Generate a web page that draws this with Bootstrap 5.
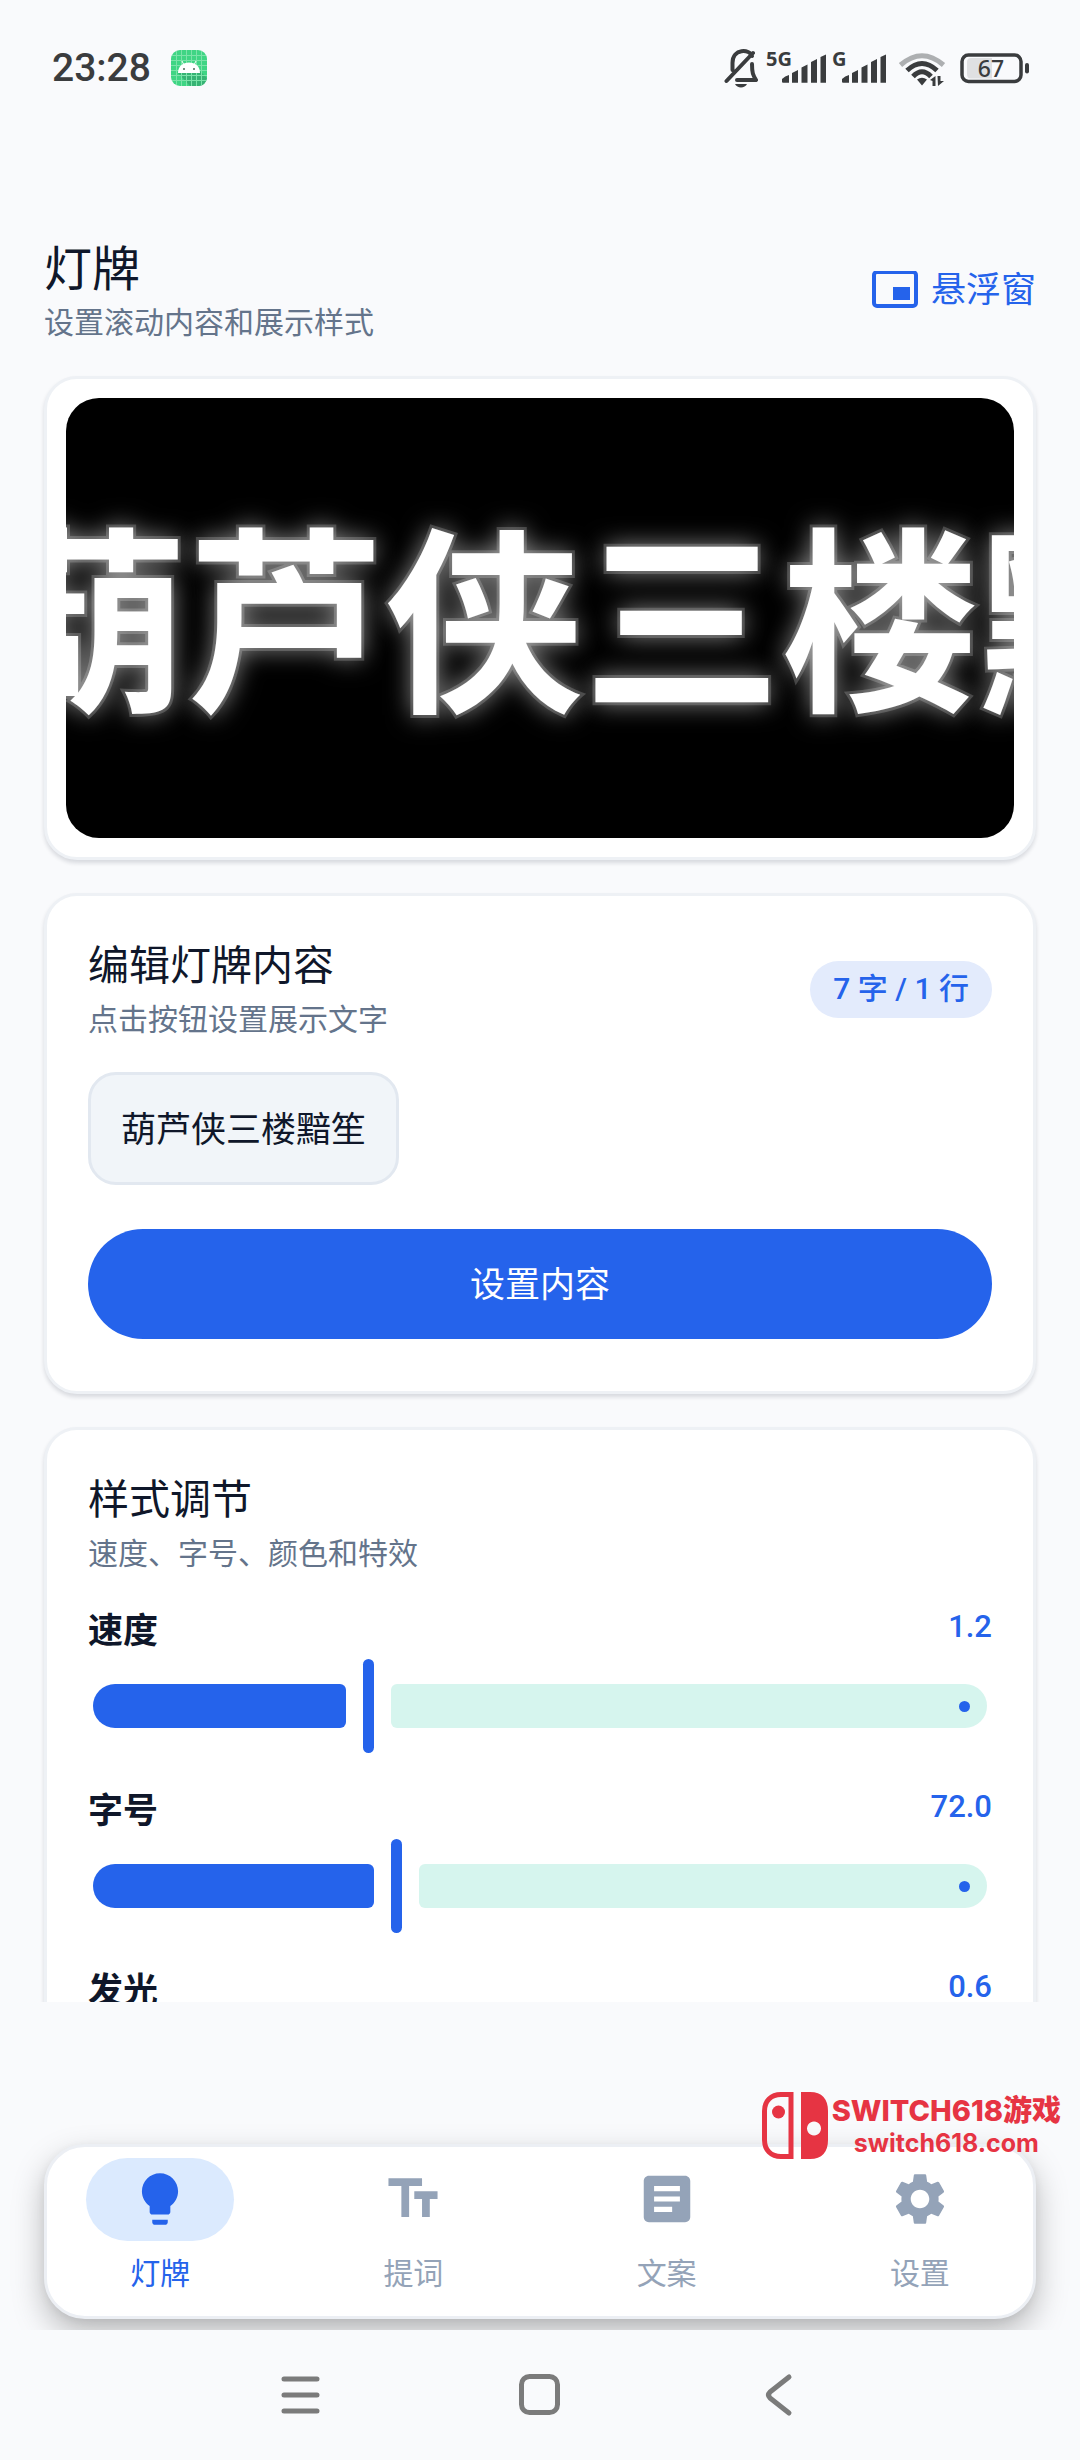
<!DOCTYPE html>
<html lang="zh-CN">
<head>
<meta charset="utf-8">
<meta name="viewport" content="width=device-width, initial-scale=1">
<title>灯牌</title>
<link rel="stylesheet" href="https://cdn.jsdelivr.net/npm/bootstrap@5.3.0/dist/css/bootstrap.min.css">
<style>
:root { --ink: #0f172a; --muted: #64748b; --faint: #94a3b8; --brand: #2563eb; --page: #f9fafc; --gutter: 44px; }
body { background: var(--page); color: var(--ink); font-family: Roboto, "Noto Sans CJK SC", sans-serif; font-size: 30px; line-height: 40px; }
svg { display: block; flex: none; }
.phone-status { padding: 40px 50px 40px 52px; color: #3a3c3e; }
.clock { font-size: 39px; font-weight: 500; line-height: 40px; }
.app-body { min-height: 0; overflow: hidden; padding: 0 var(--gutter); }
.page-head { padding: 102px 0 33px; }
.page-title { font-size: 48px; line-height: 64px; font-weight: 400; margin: 0 0 1px; }
.sub-text { color: var(--muted); margin: 0; }
.text-35 { font-size: 35px; line-height: 48px; }
.float-link { color: var(--brand); gap: 13px; }
.panel { border: 3px solid #eef1f5; border-radius: 33px; box-shadow: 0 3px 4px rgba(15,23,42,.14); margin-bottom: 33px; background: #fff; }
.panel-body { padding: 42px 41px 52px; }
.section-title { font-size: 41px; line-height: 56px; font-weight: 400; margin: 0 0 6px; }
.panel-head { margin-bottom: 32px; }
.led { margin: 19px; height: 440px; padding-top: 20px; border-radius: 33px; background: #000; overflow: hidden; }
.led-text { margin-left: -77px; color: #fff; font-size: 198px; line-height: 260px; font-weight: 700; white-space: nowrap; -webkit-text-stroke: 6px #303030; paint-order: stroke fill; text-shadow: 0 0 26px rgba(255,255,255,.6); }
.count-pill { background: #e3ebfc; color: var(--brand); font-size: 30px; line-height: 40px; font-weight: 500; padding: 8px 23px 9px; white-space: pre; }
.content-chip { background: #f1f5f9; border: 3px solid #e2e8f0; border-radius: 28px; padding: 32px 30px 27px; color: var(--ink); margin-bottom: 44px; }
.main-btn { background: var(--brand); color: #fff; border: 0; padding: 33px 30px 29px; }
.main-btn:hover { background: #1d4ed8; color: #fff; }
.slide-item { margin-bottom: 33px; }
.slide-item label { font-weight: 700; padding-top: 2px; }
.slide-value { color: var(--brand); font-size: 31px; font-weight: 500; line-height: 42px; }
.slide-box { position: relative; margin: 3px 5px 0; height: 94px; }
.rail-on { width: calc(var(--p) * (100% - 11px) - 17px); height: 44px; background: var(--brand); border-radius: 22px 6px 6px 22px; flex: none; }
.rail-off { margin-left: 45px; height: 44px; background: #d6f5ee; border-radius: 6px 22px 22px 6px; padding-right: 17px; }
.rail-dot { width: 11px; height: 11px; border-radius: 50%; background: var(--brand); }
.slide-input { position: absolute; inset: 0; width: 100%; height: 94px; margin: 0; -webkit-appearance: none; appearance: none; background: transparent; }
.slide-input::-webkit-slider-thumb { -webkit-appearance: none; width: 11px; height: 94px; border-radius: 6px; background: var(--brand); border: 0; }
.slide-input::-moz-range-thumb { width: 11px; height: 94px; border-radius: 6px; background: var(--brand); border: 0; }
.tab-zone { padding: 142px var(--gutter) 11px; overflow: hidden; position: relative; }
.tab-card { background: #fff; border: 3px solid #eceff4; border-radius: 41px; box-shadow: 0 14px 32px rgba(0,0,0,.26), 0 3px 10px rgba(0,0,0,.06); display: grid; grid-template-columns: repeat(4, 1fr); gap: 27px; padding: 11px 0 22px; }
.tab-link { color: var(--faint); text-decoration: none; gap: 13px; }
.tab-icon { padding: 10px 43px 11px; border-radius: 42px; }
.tab-link.active { color: var(--brand); }
.tab-link.active .tab-icon { background: #dbeafe; }
.site-mark { position: absolute; right: 19px; top: 90px; color: #e63443; gap: 3px; }
.site-name { font: 800 29px/34px Inter, "Noto Sans CJK SC", sans-serif; }
.site-host { font: 700 25px/30px Inter, sans-serif; }
.sys-keys { padding: 40px 0; }
.sys-keys button { width: 240px; padding: 0; border: 0; background: none; color: #7b7b7b; }
</style>
</head>
<body class="vh-100 d-flex flex-column overflow-hidden">

<header class="phone-status flex-shrink-0 d-flex align-items-center justify-content-between">
  <div class="d-flex align-items-center gap-3">
    <span class="clock">23:28</span>
    <svg class="ms-1" width="36" height="36" viewBox="0 0 36 36"><rect width="36" height="36" rx="9" fill="#3fd584"/><path d="M7 23L19 36H28Q35 35 36 28L29 21Z" fill="#37b374"/><path d="M5.500 1V35M10.500 0V36M15.500 0V36M20.500 0V36M25.500 0V36M30.500 1V35M1 5.500H35M0 10.500H36M0 15.500H36M0 20.500H36M0 25.500H36M1 30.500H35" stroke="#7be3a9" stroke-width="1" fill="none"/><path d="M7 23C7 16 12 12.500 18 12.500S29 16 29 23Z" fill="#fff"/><path d="M11 11L13 15M25 11L23 15" stroke="#fff"/><circle cx="13" cy="19" r="1" fill="#4a6a5a"/><circle cx="23" cy="19" r="1" fill="#4a6a5a"/></svg>
  </div>
  <svg width="306" height="56" viewBox="724 40 306 56" fill="#3a3c3e" font-family="Noto Sans, sans-serif">
    <g fill="none" stroke="#3a3c3e" stroke-width="4" stroke-linecap="round" stroke-linejoin="round">
      <path d="M732.500 70V63C732.500 48 750 49 752 56M752 64C752 73 753 75 756 80H737M726.500 81L753 53"/>
    </g>
    <path d="M735 84H747C745 88.500 737 88.500 735 84Z"/>
    <text x="766" y="66" font-size="20" font-weight="700">5G</text>
    <text x="832" y="66" font-size="20" font-weight="700">G</text>
    <g id="bars"><path d="M782 79Q785 76 789 75V82.700H783Q782 82.700 782 81.500ZM792 73L798 70V82.700H792ZM801.500 67.500L807.500 64.500V82.700H801.500ZM811 62L817 59V82.700H811ZM820.500 57L826 54.500V82.700H820.500Z"/></g>
    <use href="#bars" x="60"/>
    <g fill="none" stroke="#3a3c3e" stroke-width="5"><path d="M900.500 65Q922 46.500 943.500 65" stroke="#adafb1"/><path d="M907 70.500Q922 56.500 937 70.500"/><path d="M913 76.500Q922 67 931 76.500"/></g>
    <path d="M917 79.500Q922 76 927 79.500L922 85.500ZM930 80L935.500 76V86H932.500V81ZM937.500 76H940.500V81H944L938 86Z"/>
    <rect x="962" y="55" width="59" height="26.500" rx="6.500" fill="none" stroke="#3a3c3e" stroke-width="3.500"/>
    <path d="M971 58H992V78.500H971Q967 78.500 967 74V62Q967 58 971 58Z" fill="#dfe0e2"/>
    <rect x="1025" y="63" width="4" height="10.500" rx="2"/>
    <text x="991" y="77" font-size="23" font-weight="500" text-anchor="middle">67</text>
  </svg>
</header>

<main class="app-body flex-fill">
  <div class="page-head d-flex align-items-center justify-content-between">
    <div>
      <h1 class="page-title">灯牌</h1>
      <p class="sub-text">设置滚动内容和展示样式</p>
    </div>
    <a href="#float" class="float-link text-35 d-flex align-items-center text-decoration-none">
      <svg width="48" height="40" viewBox="0 0 48 40"><rect x="4" y="1" width="42" height="34" rx="3" fill="none" stroke="currentColor" stroke-width="4"/><rect x="23" y="16" width="17" height="13" fill="currentColor"/></svg>
      <span>悬浮窗</span>
    </a>
  </div>

  <section class="panel">
    <div class="led d-flex align-items-center"><div class="led-text">葫芦侠三楼黯笙</div></div>
  </section>

  <section class="panel">
    <div class="panel-body">
      <div class="panel-head d-flex align-items-center justify-content-between">
        <div>
          <h2 class="section-title">编辑灯牌内容</h2>
          <p class="sub-text">点击按钮设置展示文字</p>
        </div>
        <span class="count-pill rounded-pill">7 字 / 1 行</span>
      </div>
      <button type="button" class="content-chip text-35 d-block">葫芦侠三楼黯笙</button>
      <button type="button" class="btn main-btn text-35 rounded-pill w-100">设置内容</button>
    </div>
  </section>

  <section class="panel">
    <div class="panel-body">
      <div class="panel-head">
        <h2 class="section-title">样式调节</h2>
        <p class="sub-text">速度、字号、颜色和特效</p>
      </div>
      <div class="slide-item">
        <div class="d-flex justify-content-between"><label class="text-35" for="speed">速度</label><output class="slide-value" for="speed">1.2</output></div>
        <div class="slide-box d-flex align-items-center" style="--p:.306">
          <div class="rail-on"></div><div class="rail-off flex-fill d-flex align-items-center justify-content-end"><span class="rail-dot"></span></div>
          <input class="slide-input" type="range" id="speed" min="0.3" max="3.24" step="any" value="1.2">
        </div>
      </div>
      <div class="slide-item">
        <div class="d-flex justify-content-between"><label class="text-35" for="size">字号</label><output class="slide-value" for="size">72.0</output></div>
        <div class="slide-box d-flex align-items-center" style="--p:.338">
          <div class="rail-on"></div><div class="rail-off flex-fill d-flex align-items-center justify-content-end"><span class="rail-dot"></span></div>
          <input class="slide-input" type="range" id="size" min="24" max="166" step="any" value="72">
        </div>
      </div>
      <div class="slide-item">
        <div class="d-flex justify-content-between"><label class="text-35" for="glow">发光</label><output class="slide-value" for="glow">0.6</output></div>
        <div class="slide-box d-flex align-items-center" style="--p:.6">
          <div class="rail-on"></div><div class="rail-off flex-fill d-flex align-items-center justify-content-end"><span class="rail-dot"></span></div>
          <input class="slide-input" type="range" id="glow" min="0" max="1" step="any" value="0.6">
        </div>
      </div>
    </div>
  </section>
</main>

<div class="tab-zone flex-shrink-0">
  <nav class="tab-card">
    <a href="#board" class="tab-link active d-flex flex-column align-items-center" aria-current="page">
      <span class="tab-icon"><svg width="62" height="62" viewBox="0 0 24 24" fill="currentColor"><path d="M9 21c0 .55.45 1 1 1h4c.55 0 1-.45 1-1v-1H9v1zm3-19C8.140 2 5 5.140 5 9c0 2.380 1.190 4.470 3 5.740V17c0 .55.45 1 1 1h6c.55 0 1-.45 1-1v-2.260c1.810-1.270 3-3.360 3-5.740 0-3.860-3.140-7-7-7z"/></svg></span>
      <span>灯牌</span>
    </a>
    <a href="#prompter" class="tab-link d-flex flex-column align-items-center">
      <span class="tab-icon"><svg width="62" height="62" viewBox="0 0 24 24" fill="currentColor"><path d="M2.500 4v3h5v12h3V7h5V4h-13zm19 5h-9v3h3v7h3v-7h3V9z"/></svg></span>
      <span>提词</span>
    </a>
    <a href="#copy" class="tab-link d-flex flex-column align-items-center">
      <span class="tab-icon"><svg width="62" height="62" viewBox="0 0 24 24" fill="currentColor"><path d="M19 3H5c-1.100 0-2 .9-2 2v14c0 1.100.9 2 2 2h14c1.100 0 2-.9 2-2V5c0-1.100-.9-2-2-2zm-5 14H7v-2h7v2zm3-4H7v-2h10v2zm0-4H7V7h10v2z"/></svg></span>
      <span>文案</span>
    </a>
    <a href="#settings" class="tab-link d-flex flex-column align-items-center">
      <span class="tab-icon"><svg width="62" height="62" viewBox="0 0 24 24" fill="currentColor"><path d="M19.140 12.940c.04-.3.06-.61.06-.94 0-.32-.02-.64-.07-.94l2.030-1.580c.18-.14.23-.41.12-.61l-1.920-3.320c-.12-.22-.37-.29-.59-.22l-2.390.96c-.5-.38-1.030-.7-1.620-.94L14.400 2.810c-.04-.24-.24-.41-.48-.41h-3.840c-.24 0-.43.17-.47.41L9.250 5.350c-.59.24-1.130.57-1.620.94L5.240 5.330c-.22-.08-.47 0-.59.22L2.740 8.870c-.12.21-.08.47.12.61l2.030 1.580c-.05.3-.09.63-.09.94s.02.64.07.94l-2.030 1.580c-.18.14-.23.41-.12.61l1.920 3.320c.12.22.37.29.59.22l2.390-.96c.5.38 1.030.7 1.620.94l.36 2.540c.05.24.24.41.48.41h3.840c.24 0 .44-.17.47-.41l.36-2.540c.59-.24 1.130-.56 1.620-.94l2.390.96c.22.08.47 0 .59-.22l1.920-3.320c.12-.22.07-.47-.12-.61l-2.010-1.580zM12 15.600c-1.980 0-3.600-1.620-3.600-3.600s1.620-3.600 3.600-3.600 3.600 1.620 3.600 3.600-1.620 3.600-3.600 3.600z"/></svg></span>
      <span>设置</span>
    </a>
  </nav>
  <div class="site-mark d-flex align-items-center">
    <svg width="67" height="67" viewBox="0 0 67 67"><path d="M29 2.500H19C9 2.500 2.500 9 2.500 19V48C2.500 58 9 64.500 19 64.500H29Z" fill="none" stroke="currentColor" stroke-width="5"/><circle cx="16.500" cy="20" r="6.500" fill="currentColor"/><path fill-rule="evenodd" d="M39 0H48C60 0 66 7 66 19V48C66 60 60 67 48 67H39ZM52 29.500a7 7 0 1 0 .01 0Z" fill="currentColor"/></svg>
    <div class="d-flex flex-column align-items-center">
      <span class="site-name">SWITCH618游戏</span>
      <span class="site-host">switch618.com</span>
    </div>
  </div>
</div>

<div class="sys-keys flex-shrink-0 d-flex justify-content-center">
  <button type="button" aria-label="最近任务"><svg class="mx-auto" width="50" height="50" viewBox="0 0 50 50" fill="none" stroke="currentColor" stroke-width="5" stroke-linecap="round"><path d="M9 9H42M9 25H42M9 41H42"/></svg></button>
  <button type="button" aria-label="主屏幕"><svg class="mx-auto" width="50" height="50" viewBox="0 0 50 50" fill="none" stroke="currentColor" stroke-width="5"><rect x="6.500" y="6.500" width="36" height="36" rx="8"/></svg></button>
  <button type="button" aria-label="返回"><svg class="mx-auto" width="50" height="50" viewBox="0 0 50 50" fill="none" stroke="currentColor" stroke-width="5" stroke-linecap="round" stroke-linejoin="round"><path d="M34 7L15 22Q12 25 15 28L34 43"/></svg></button>
</div>

<script src="https://cdn.jsdelivr.net/npm/bootstrap@5.3.0/dist/js/bootstrap.bundle.min.js"></script>
</body>
</html>
